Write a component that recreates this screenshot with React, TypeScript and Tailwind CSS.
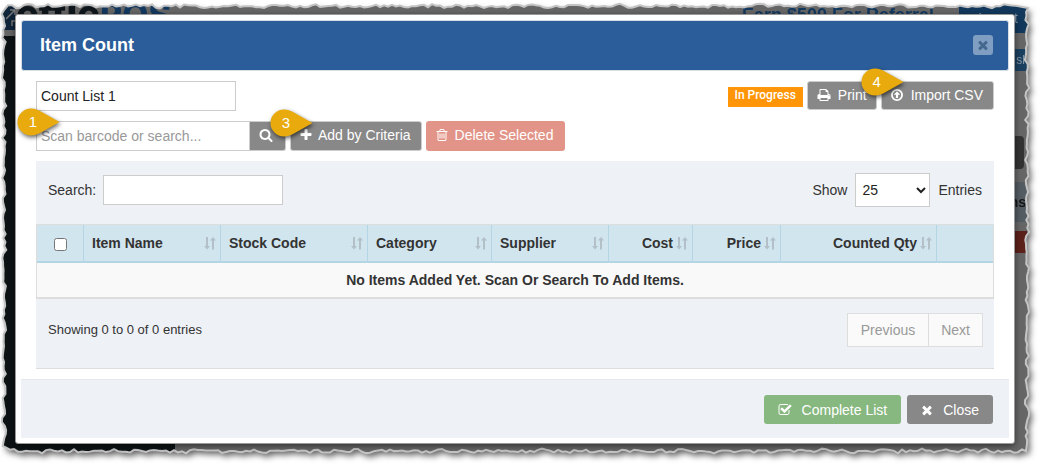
import { useState } from "react";
import type { ReactNode } from "react";

const ICONS = {
  times:
    "M1490 1322q0 40-28 68l-136 136q-28 28-68 28t-68-28l-294-294-294 294q-28 28-68 28t-68-28l-136-136q-28-28-28-68t28-68l294-294-294-294q-28-28-28-68t28-68l136-136q28-28 68-28t68 28l294 294 294-294q28-28 68-28t68 28l136 136q28 28 28 68t-28 68l-294 294 294 294q28 28 28 68z",
  plus: "M1600 736v192q0 40-28 68t-68 28h-416v416q0 40-28 68t-68 28h-192q-40 0-68-28t-28-68v-416h-416q-40 0-68-28t-28-68v-192q0-40 28-68t68-28h416v-416q0-40 28-68t68-28h192q40 0 68 28t28 68v416h416q40 0 68 28t28 68z",
  search:
    "M1216 832q0-185-131.5-316.5t-316.5-131.5-316.5 131.5-131.5 316.5 131.5 316.5 316.5 131.5 316.5-131.5 131.5-316.5zm512 832q0 52-38 90t-90 38q-54 0-90-38l-343-342q-179 124-399 124-143 0-273.5-55.5t-225-150-150-225-55.5-273.5 55.5-273.5 150-225 225-150 273.5-55.5 273.5 55.5 225 150 150 225 55.5 273.5q0 220-124 399l343 343q37 37 37 90z",
  print:
    "M448 1536h896v-256h-896v256zm0-640h896v-384h-160q-40 0-68-28t-28-68v-160h-640v640zm1152 64q0-26-19-45t-45-19-45 19-19 45 19 45 45 19 45-19 19-45zm128 0v416q0 13-9.5 22.5t-22.5 9.5h-224v160q0 40-28 68t-68 28h-960q-40 0-68-28t-28-68v-160h-224q-13 0-22.5-9.5t-9.5-22.5v-416q0-79 56.5-135.5t135.5-56.5h64v-544q0-40 28-68t68-28h672q40 0 88 20t76 48l152 152q28 28 48 76t20 88v256h64q79 0 135.5 56.5t56.5 135.5z",
  trash:
    "M704 736v576q0 14-9 23t-23 9h-64q-14 0-23-9t-9-23v-576q0-14 9-23t23-9h64q14 0 23 9t9 23zm256 0v576q0 14-9 23t-23 9h-64q-14 0-23-9t-9-23v-576q0-14 9-23t23-9h64q14 0 23 9t9 23zm256 0v576q0 14-9 23t-23 9h-64q-14 0-23-9t-9-23v-576q0-14 9-23t23-9h64q14 0 23 9t9 23zm128 724v-948h-896v948q0 22 7 40.5t14.5 27 10.5 8.5h832q3 0 10.5-8.5t14.5-27 7-40.5zm-672-1076h448l-48-117q-7-9-17-11h-317q-10 2-17 11zm928 32v64q0 14-9 23t-23 9h-96v948q0 83-47 143.5t-113 60.5h-832q-66 0-113-58.5t-47-141.5v-952h-96q-14 0-23-9t-9-23v-64q0-14 9-23t23-9h309l70-167q15-37 54-63t79-26h320q40 0 79 26t54 63l70 167h309q14 0 23 9t9 23z",
  check:
    "M1472 930v318q0 119-84.5 203.5t-203.5 84.5h-832q-119 0-203.5-84.5t-84.5-203.5v-832q0-119 84.5-203.5t203.5-84.5h832q63 0 117 25 15 7 18 23 3 17-9 29l-49 49q-10 10-23 10-3 0-9-2-23-6-45-6h-832q-66 0-113 47t-47 113v832q0 66 47 113t113 47h832q66 0 113-47t47-113v-254q0-13 9-22l64-64q10-10 23-10 6 0 12 3 20 8 20 29zm231-489l-814 814q-24 24-57 24t-57-24l-430-430q-24-24-24-57t24-57l110-110q24-24 57-24t57 24l263 263 647-647q24-24 57-24t57 24l110 110q24 24 24 57t-24 57z",
};

function Icon({ name }: { name: keyof typeof ICONS }) {
  return (
    <svg viewBox="0 0 1792 1792" className="size-[14px] shrink-0 fill-current" aria-hidden="true">
      <path d={ICONS[name]} />
    </svg>
  );
}

function UploadIcon() {
  return (
    <svg viewBox="0 0 14 14" className="size-[14px] shrink-0" fill="none" stroke="currentColor" aria-hidden="true">
      <circle cx="7" cy="7" r="5.1" strokeWidth="1.8" />
      <path d="M7 3.2 L10.3 6.7 H8.1 V10 H5.9 V6.7 H3.7 Z" fill="currentColor" stroke="none" />
    </svg>
  );
}

function SortIcon() {
  return (
    <svg viewBox="0 0 12 13" className="h-[13px] w-3 shrink-0 fill-[#b3c0c8]" aria-hidden="true">
      <path d="M2 0h2v9h2L3 12.5 0 9h2z" />
      <path d="M8 12.5h2V3.5h2L9 0 6 3.5h2z" />
    </svg>
  );
}

// numbered teardrop pointing right, placed over a corner of its control
function Marker({ n, className }: { n: number; className: string }) {
  return (
    <div className={`pointer-events-none absolute z-10 h-7 w-[43px] ${className}`}>
      <svg viewBox="0 0 43 28" className="absolute inset-0 size-full overflow-visible drop-shadow-[1px_2px_2px_rgba(0,0,0,0.6)]" aria-hidden="true">
        <path d="M14 .5C18 .5 20 1.500 23 3L42.500 14 23 25C20 26.500 18 27.500 14 27.500A13.500 13.500 0 0 1 14 .5Z" fill="#e8aa0c" />
      </svg>
      <span className="relative block w-8 text-center text-[15px] leading-7 text-white">{n}</span>
    </div>
  );
}

// ragged outline of the page behind the dialog, in a 1042 x 467 box
const W = 1042;
const H = 467;

function wobble(i: number) {
  const noise = Math.sin(i * 12.9898) * 43758.5453;
  return (noise - Math.floor(noise) - 0.5) * 3 + Math.sin(i * 0.31 + 2) * 0.7 + Math.sin(i * 0.13) * 0.5;
}

function tornOutline() {
  const pts: [number, number][] = [];
  for (let x = 8; x < 1024; x += 4) pts.push([x, 6 + wobble(x)]);
  for (let y = 8; y < 446; y += 4) pts.push([1027 + wobble(y + 31), y]);
  for (let x = 1026; x > 8; x -= 4) pts.push([x, 451 + wobble(x + 77)]);
  for (let y = 446; y > 8; y -= 4) pts.push([4 + wobble(y + 13), y]);
  return pts;
}

const outline = tornOutline();
const clip = `polygon(${outline.map(([x, y]) => `${(x / W) * 100}% ${(y / H) * 100}%`).join(",")})`;
const points = outline.map((p) => p.join(",")).join(" ");

function Backdrop() {
  return (
    <div className="absolute inset-0" aria-hidden="true">
      <div className="absolute inset-0 drop-shadow-[3px_4px_3px_rgba(0,0,0,0.6)]">
        <div className="size-full bg-[#666]" style={{ clipPath: clip }}>
          <div className="absolute top-0 left-0 h-[30px] w-4 bg-[#10253a]" />
          <svg viewBox="0 0 10 18" className="absolute top-2 left-[6px] h-[18px] w-[10px]" fill="none" stroke="#777" strokeWidth="1.5">
            <path d="M0 11 9 2M4 2h5v5M6 18v-5h4" />
          </svg>
          <div className="absolute top-[36px] bottom-0 left-0 w-[175px] bg-[#0d1315]" />
          <div className="absolute -top-[3px] left-[16px] font-[Inter] text-[38px] leading-8 font-extrabold text-[#10171c]">
            ettle<span className="text-[34px] text-[#13395f]">POS</span>
          </div>
          <div className="absolute top-[5px] right-[108px] text-[18px] leading-5 font-bold text-[#13395f]">Earn $500 For Referral</div>
          <div className="absolute top-0 right-0 h-[33px] w-[83px] bg-[#12385c] pt-2 pr-6 text-right text-sm text-[#8798a8]">Import</div>
          <div className="absolute top-[49px] right-0 h-[22px] w-[83px] bg-[#1b405f] pr-[17px] text-right text-xs leading-[22px] text-[#8798a8]">sl</div>
          <div className="absolute top-[136px] right-[18px] h-[33px] w-[60px] rounded bg-[#333]" />
          <div className="absolute top-[182px] right-0 h-10 w-[83px] bg-[#535c62] pr-[16px] text-right text-sm leading-10 font-bold text-[#151515]">ns</div>
          <div className="absolute top-[231px] right-[15px] h-[22px] w-[60px] bg-[#5c2119]" />
        </div>
      </div>
      <svg viewBox={`0 0 ${W} ${H}`} preserveAspectRatio="none" className="absolute inset-0 size-full">
        <polygon points={points} fill="none" stroke="#c4c4c4" strokeWidth="2" vectorEffect="non-scaling-stroke" />
      </svg>
    </div>
  );
}

function GrayButton({ children, className = "" }: { children: ReactNode; className?: string }) {
  return (
    <button className={`relative flex items-center rounded-[3px] border border-[#ccc] bg-[#888] pb-[2px] text-sm text-white ${className}`}>
      {children}
    </button>
  );
}

const columns = [
  { label: "Item Name", width: "w-[137px]", right: false },
  { label: "Stock Code", width: "w-[147px]", right: false },
  { label: "Category", width: "w-[124px]", right: false },
  { label: "Supplier", width: "w-[117px]", right: false },
  { label: "Cost", width: "w-[84px]", right: true },
  { label: "Price", width: "w-[88px]", right: true },
  { label: "Counted Qty", width: "w-[156px]", right: true },
];

export default function App() {
  const [listName, setListName] = useState("Count List 1");
  const [barcode, setBarcode] = useState("");
  const [search, setSearch] = useState("");
  const [pageSize, setPageSize] = useState("25");

  return (
    <div className="relative bg-white pt-[14px] pr-[27px] pb-[23px] pl-[15px] font-['Liberation_Sans',Arial,sans-serif] text-sm text-[#333]">
      <Backdrop />

      <div role="dialog" aria-labelledby="title" className="relative rounded-[3px] border border-[#999] bg-white p-[5px] shadow-[0_2px_6px_rgba(0,0,0,0.5)]">
        <header className="flex h-[51px] items-center justify-between rounded-[3px] border border-[#d5dde5] bg-[#2a5d99] pr-[15px] pb-[2px] pl-[18px]">
          <h1 id="title" className="text-lg font-bold text-white">Item Count</h1>
          <button aria-label="Close dialog" className="flex size-5 items-center justify-center rounded-[3px] bg-[#7f9ec2] text-[#45688f]">
            <Icon name="times" />
          </button>
        </header>

        <main className="px-[15px] py-[10px]">
          <div className="flex items-start justify-between">
            <input
              aria-label="List name"
              value={listName}
              onChange={(e) => setListName(e.target.value)}
              className="h-[30px] w-[200px] border border-[#ccc] bg-white px-1 text-sm text-[#222]"
            />
            <div className="flex items-start">
              <span className="mt-[6px] mr-1 h-5 bg-[#ff9507] px-[7px] font-[Roboto] text-xs leading-4 font-medium text-white">In Progress</span>
              <GrayButton className="mr-1 h-[29px] gap-[7px] px-[9px]">
                <Icon name="print" />
                Print
              </GrayButton>
              <GrayButton className="h-[29px] gap-[7px] pr-[10px] pl-2">
                <Marker n={4} className="-top-[14px] -left-[21px]" />
                <UploadIcon />
                Import CSV
              </GrayButton>
            </div>
          </div>

          <div className="mt-[10px] flex">
            <div className="relative flex">
              <input
                aria-label="Scan barcode or search"
                placeholder="Scan barcode or search..."
                value={barcode}
                onChange={(e) => setBarcode(e.target.value)}
                className="h-[30px] w-[214px] border border-[#ccc] bg-white px-1 text-sm placeholder:text-[#999]"
              />
              <button aria-label="Search items" className="flex h-[30px] w-9 items-center justify-center rounded-r-[3px] border border-l-0 border-[#ccc] bg-[#888] pr-[3px] pb-[2px] text-white">
                <Icon name="search" />
              </button>
              <Marker n={1} className="-top-[13px] -left-[19px]" />
            </div>
            <GrayButton className="ml-1 h-[30px] gap-[5px] pr-[10px] pl-2">
              <Marker n={3} className="-top-[13px] -left-[21px]" />
              <Icon name="plus" />
              Add by Criteria
            </GrayButton>
            <button className="ml-1 flex h-[30px] items-center gap-[6px] rounded-[3px] bg-[#e29488] pr-[12px] pb-[2px] pl-[9px] text-sm text-white">
              <Icon name="trash" />
              Delete Selected
            </button>
          </div>

          <section className="mt-[10px] border-b border-[#ddd] bg-[#eef1f6]">
            <div className="flex h-[63px] items-start justify-between px-3 pt-3">
              <label className="flex items-center gap-[7px] pt-[2px]">
                Search:
                <input value={search} onChange={(e) => setSearch(e.target.value)} className="h-[30px] w-[180px] border border-[#ccc] bg-white px-1" />
              </label>
              <label className="flex items-center gap-2">
                Show
                <select
                  value={pageSize}
                  onChange={(e) => setPageSize(e.target.value)}
                  className="h-[34px] w-[75px] border border-[#ccc] bg-white px-[2px] text-sm text-[#222]"
                >
                  <option>10</option>
                  <option>25</option>
                  <option>50</option>
                </select>
                Entries
              </label>
            </div>

            <table className="w-full table-fixed border-separate border-spacing-0 border border-[#ddd]">
              <thead>
                <tr className="h-[38px] bg-[#d1e5ef]">
                  <th className="w-[47px] border-r border-b-2 border-[#b4d5e4]">
                    <input type="checkbox" aria-label="Select all" className="mx-auto mt-[2px] block size-[13px]" />
                  </th>
                  {columns.map((c) => (
                    <th key={c.label} className={`${c.width} border-r border-b-2 border-[#b4d5e4] pr-1 pl-2 font-bold`}>
                      <div className={c.right ? "flex items-center justify-end gap-[3px]" : "flex items-center justify-between"}>
                        {c.label}
                        <SortIcon />
                      </div>
                    </th>
                  ))}
                  <th className="border-b-2 border-[#b4d5e4]"></th>
                </tr>
              </thead>
              <tbody>
                <tr className="h-[35px] bg-[#f9f9f9]">
                  <td colSpan={9} className="border-b border-[#ddd] text-center font-bold">
                    No Items Added Yet. Scan Or Search To Add Items.
                  </td>
                </tr>
              </tbody>
            </table>

            <div className="flex h-[69px] items-start justify-between pt-[14px] pr-[11px] pl-3">
              <p className="text-[13px] leading-[34px]">Showing 0 to 0 of 0 entries</p>
              <div className="flex h-[34px] border border-[#ddd] bg-[#fafafa] text-[#999]">
                <button className="border-r border-[#ddd] px-[13px]">Previous</button>
                <button className="px-3">Next</button>
              </div>
            </div>
          </section>
        </main>

        <footer className="flex h-[59px] items-center justify-end gap-[6px] border-t border-[#e3e6ea] bg-[#eef1f6] pt-[1px] pr-4">
          <button className="flex h-[29px] items-center gap-[10px] rounded-[3px] bg-[#87b87f] px-[14px] text-sm text-white">
            <Icon name="check" />
            Complete List
          </button>
          <button className="flex h-[29px] items-center gap-[9px] rounded-[3px] bg-[#888] pr-[14px] pl-[13px] text-sm text-white">
            <Icon name="times" />
            Close
          </button>
        </footer>
      </div>
    </div>
  );
}
